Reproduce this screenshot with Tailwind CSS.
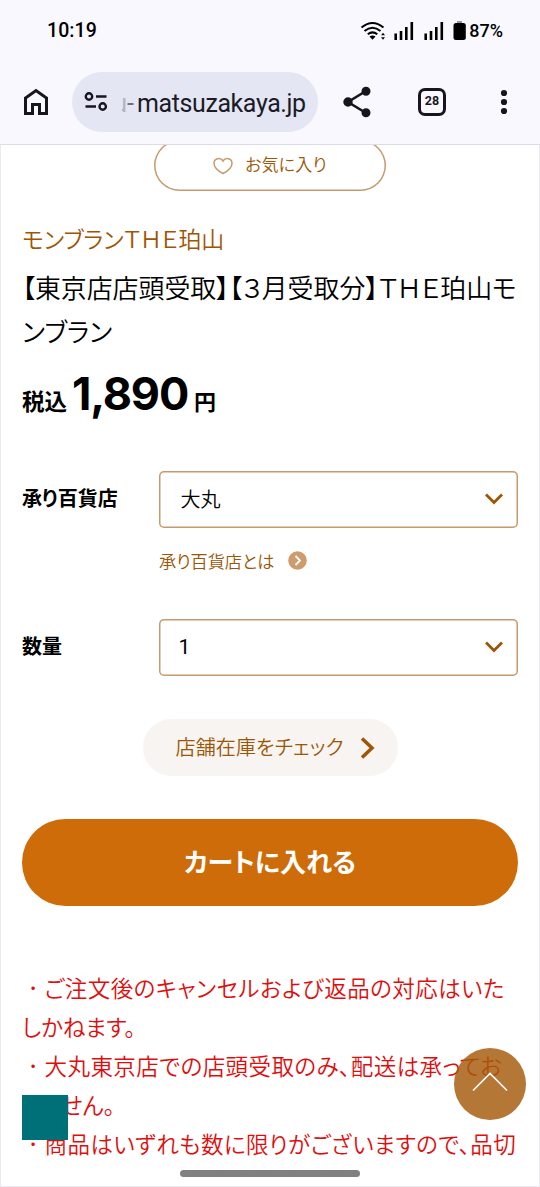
<!DOCTYPE html>
<html lang="ja">
<head>
<meta charset="utf-8">
<title>モンブランＴＨＥ珀山</title>
<script src="https://cdn.jsdelivr.net/npm/@tailwindcss/browser@4"></script>
</head>
<body class="bg-white">
<div class="relative flex h-[1187px] w-[540px] flex-col overflow-hidden bg-white font-['Noto_Sans_CJK_JP',sans-serif] font-[350] text-black [font-feature-settings:'palt']">
  <header class="flex h-[145px] shrink-0 flex-col border-b border-[#dcdce8] bg-[#f9f8ff]">
    <div class="flex h-[61px] items-center pl-[47px] pr-[37px] font-[Roboto,sans-serif]">
      <span class="text-[19.500px] leading-6 font-medium tracking-[0.1px]">10:19</span>
      <svg class="ml-auto h-[22px] w-[112px]" viewBox="360 19 112 22" fill="none" stroke="#000">
        <path d="M361.500 26.500Q372.500 17.500 383.500 26.500M364.500 30Q372.500 23.500 380.500 30M367.800 33.300Q372.500 29.500 377.300 33.300" stroke-width="2"/>
        <path d="M369.500 35.500Q372.500 33.500 375.500 35.500L372.500 38.700Z" fill="#000" stroke="none"/>
        <path d="M381 34.300L383 31.800L385 34.300ZM381 36.200H385L383 38.700Z" fill="#000" stroke="none"/>
        <path d="M395.700 39V32.500M401 39V30M406.300 39V26M411.800 39V21M425.700 39V32.500M431 39V30M436.300 39V26M441.800 39V21" stroke-width="2.600"/>
        <rect x="453.500" y="22" width="12.300" height="17" rx="2.500" fill="#000" stroke="none"/>
        <path d="M457 21H462" stroke-width="1.500" stroke="#777"/>
      </svg>
      <span class="-ml-[3px] text-[18px] leading-6 font-medium">87%</span>
    </div>
    <div class="flex h-[83px] items-center pl-[22px]">
      <svg class="-mt-0.5 h-7 w-7" viewBox="0 0 28 28" fill="none" stroke="#16161f" stroke-width="3"><path d="M3.500 25.500V10L14 2.500L24.500 10V25.500H17.500V16.500H10.500V25.500Z"/></svg>
      <div class="-mt-px ml-[22px] flex h-[60px] w-[246px] items-center rounded-full bg-[#e4e6f4] pl-[12px]">
        <svg class="h-5 w-6" viewBox="0 0 24 20" fill="none" stroke="#16161f" stroke-width="2.400"><circle cx="5" cy="4.500" r="3.200"/><path d="M12 4.500H22.500M1.500 14.500H12"/><circle cx="18.700" cy="14.500" r="3.200"/></svg>
        <span class="mt-[3px] ml-[14px] h-8 w-[5px] overflow-hidden text-[25px] leading-8 font-normal text-[#b3b5c2] font-[Roboto,sans-serif]"><span class="float-right">u</span></span>
        <span class="mt-[3px] text-[25px] leading-8 font-normal tracking-[-0.400px] text-[#1b1b26] font-[Roboto,sans-serif]"><span class="mr-[3.500px] text-[#70717d]">-</span>matsuzakaya.jp</span>
      </div>
      <svg class="-mt-0.5 ml-[25px] h-8 w-[30px]" viewBox="0 0 30 32" fill="#16161f" stroke="#16161f" stroke-width="2.600"><path d="M23 5L5 16L23 27" fill="none"/><circle cx="23" cy="5.200" r="3.200"/><circle cx="5" cy="16" r="3.400"/><circle cx="23" cy="26.800" r="3.200"/></svg>
      <div class="-mt-0.5 ml-[45px] flex h-7 w-7 items-center justify-center rounded-[7px] border-[3px] border-[#16161f] text-[12.500px] leading-none font-bold text-[#16161f] font-[Roboto,sans-serif]">28</div>
      <svg class="-mt-0.5 ml-[54px] h-7 w-2" viewBox="0 0 8 28" fill="#16161f"><circle cx="4" cy="5" r="3.100"/><circle cx="4" cy="14" r="3.100"/><circle cx="4" cy="23" r="3.100"/></svg>
    </div>
  </header>

  <main class="flex min-h-0 flex-1 flex-col overflow-hidden border-x border-b border-[#e9e9ee] px-[21px]">
    <button class="-mt-[5px] flex h-[51px] w-[232px] shrink-0 items-center self-center rounded-full inset-ring-[1.500px] inset-ring-[#c79a6d] pl-[59px] text-[#9c5605]">
      <svg class="mt-px h-[18px] w-5" viewBox="0 0 20 18" fill="none" stroke="#c79a6d" stroke-width="1.500"><path d="M10 16.500C5 14 1 10.500 1 6.300C1 1.500 7.500-.2 10 4C12.500-.2 19 1.500 19 6.300C19 10.500 15 14 10 16.500Z"/></svg>
      <span class="-mt-1 ml-[12px] text-[17px] leading-6 tracking-[0.200px] whitespace-nowrap">お気に入り</span>
    </button>

    <p class="mt-[29px] shrink-0 text-[22.900px] leading-[36px] whitespace-nowrap text-[#9f5604]">モンブランＴＨＥ珀山</p>
    <h1 class="mt-[9px] shrink-0 text-[25.900px] leading-[44px] whitespace-nowrap">【東京店店頭受取】【３月受取分】ＴＨＥ珀山モ<br>ンブラン</h1>
    <p class="mt-[13px] flex h-[56px] shrink-0 items-baseline font-bold whitespace-nowrap">
      <span class="text-[22.500px] leading-[56px]">税込</span>
      <span class="ml-[5px] text-[45px] leading-[56px] tracking-[-1.200px] font-[Inter,sans-serif]">1,890</span>
      <span class="ml-[6px] text-[22px] leading-[56px]">円</span>
    </p>

    <div class="mt-[48.500px] flex h-[57px] shrink-0 items-center">
      <span class="-mt-0.5 w-[136.500px] text-[20px] font-bold whitespace-nowrap">承り百貨店</span>
      <div class="flex h-full flex-1 items-center justify-between rounded-[5px] inset-ring-[1.500px] inset-ring-[#c79a6d] pl-[22px] pr-[14px] text-[20px]">
        <span>大丸</span>
        <svg class="h-3 w-5" viewBox="0 0 20 12" fill="none" stroke="#9c5605" stroke-width="2.800"><path d="M2 1.500L10 9.500L18 1.500"/></svg>
      </div>
    </div>
    <div class="ml-[137px] mt-[20px] flex h-[26px] shrink-0 items-center text-[#9c5605]">
      <span class="text-[17.200px] leading-6 whitespace-nowrap">承り百貨店とは</span>
      <svg class="ml-[14px] h-[19px] w-[19px]" viewBox="0 0 19 19"><circle cx="9.500" cy="9.500" r="9.300" fill="#cd9b6c"/><path d="M7.500 5L12 9.500L7.500 14" fill="none" stroke="#fff" stroke-width="1.800"/></svg>
    </div>
    <div class="mt-[45px] flex h-[57px] shrink-0 items-center">
      <span class="-mt-0.5 w-[136.500px] text-[20px] font-bold">数量</span>
      <div class="flex h-full flex-1 items-center justify-between rounded-[5px] inset-ring-[1.500px] inset-ring-[#c79a6d] pl-[20px] pr-[14px] text-[20px]">
        <span class="mt-0.5 text-[21px] font-normal font-[Roboto,sans-serif]">1</span>
        <svg class="h-3 w-5" viewBox="0 0 20 12" fill="none" stroke="#9c5605" stroke-width="2.800"><path d="M2 1.500L10 9.500L18 1.500"/></svg>
      </div>
    </div>

    <button class="mt-[43.500px] flex h-[57px] w-[255px] shrink-0 items-center self-center rounded-full bg-[#f8f4f1] pl-[33px] text-[20px] whitespace-nowrap text-[#9c5605]">
      <span class="-mt-0.5 w-[170px] text-left tracking-[0.150px]">店舗在庫をチェック</span>
      <svg class="ml-[14px] h-[22px] w-4" viewBox="0 0 16 22" fill="none" stroke="#9c5605" stroke-width="3.500"><path d="M2 1.500L12 11L2 20.500"/></svg>
    </button>
    <button class="mt-[43px] flex h-[87px] shrink-0 items-center justify-center rounded-full bg-[#cd6c08] text-[26px] font-bold whitespace-nowrap text-white"><span class="-mt-1">カートに入れる</span></button>

    <div class="mt-[62px] shrink-0 text-[22.500px] leading-[39px] tracking-[0.450px] whitespace-nowrap text-[#e00d0d]">
      <p><span class="inline-block w-[22.500px] text-center font-light [font-feature-settings:normal]">･</span>ご注文後のキャンセルおよび返品の対応はいた</p>
      <p class="tracking-normal">しかねます。</p>
      <p><span class="inline-block w-[22.500px] text-center font-light [font-feature-settings:normal]">･</span>大丸東京店での店頭受取のみ、配送は承ってお</p>
      <p class="tracking-normal">りません。</p>
      <p><span class="inline-block w-[22.500px] text-center font-light [font-feature-settings:normal]">･</span>商品はいずれも数に限りがございますので、品切</p>
    </div>
  </main>

  <div class="absolute left-[22px] top-[1095px] h-[45px] w-[46px] bg-[#007078]"></div>
  <button class="absolute left-[454px] top-[1048px] flex h-[72px] w-[72px] items-center justify-center rounded-full bg-[#a65b0c]/83">
    <svg class="-mt-1 h-5 w-[38px]" viewBox="0 0 38 20" fill="none" stroke="#fff" stroke-width="1.600"><path d="M2 18.500L19 1.500L36 18.500"/></svg>
  </button>
  <div class="absolute left-[180px] top-[1170px] h-[7px] w-[180px] rounded-full bg-[#808080]"></div>
</div>
</body>
</html>
